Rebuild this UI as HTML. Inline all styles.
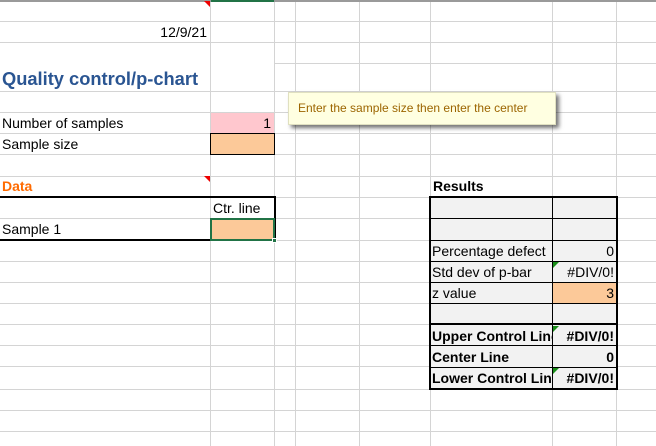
<!DOCTYPE html>
<html><head><meta charset="utf-8"><style>
body{margin:0;width:656px;height:446px;overflow:hidden;background:#fff;position:relative;font-family:"Liberation Sans",Arial,sans-serif;font-size:14px;color:#000}
.h{position:absolute;left:0;width:656px;height:1px;background:#d4d4d4}
.v{position:absolute;top:0;height:446px;width:1px;background:#d4d4d4}
.a{position:absolute;box-sizing:border-box}
.t{position:absolute;white-space:nowrap;line-height:21px}
.b{font-weight:bold}
.r{text-align:right}
</style></head><body>
<div class="v" style="left:210px"></div><div class="v" style="left:274px"></div><div class="v" style="left:295px"></div><div class="v" style="left:359px"></div><div class="v" style="left:430px"></div><div class="v" style="left:552px"></div><div class="v" style="left:616px"></div>
<div class="h" style="top:21px"></div><div class="h" style="top:42px"></div><div class="h" style="top:63px;left:274px;width:382px"></div><div class="h" style="top:91px"></div><div class="h" style="top:112px"></div><div class="h" style="top:133px"></div><div class="h" style="top:154px"></div><div class="h" style="top:176px"></div><div class="h" style="top:197px"></div><div class="h" style="top:218px"></div><div class="h" style="top:240px"></div><div class="h" style="top:261px"></div><div class="h" style="top:282px"></div><div class="h" style="top:303px"></div><div class="h" style="top:324px"></div><div class="h" style="top:345px"></div><div class="h" style="top:366px"></div><div class="h" style="top:389px"></div><div class="h" style="top:410px"></div><div class="h" style="top:431px"></div>
<div class="a" style="left:0;top:0;width:656px;height:2px;background:#9a9a9a"></div>
<div class="a" style="left:211px;top:0;width:63px;height:2px;background:#217346"></div>
<div class="a" style="left:204px;top:1px;width:0;height:0;border-left:6px solid transparent;border-top:6px solid #e00"></div>
<div class="t r" style="left:100px;width:107px;top:22px">12/9/21</div>
<div class="t b" style="left:2px;top:67px;font-size:18.3px;line-height:24px;color:#2a5592">Quality control/p-chart</div>
<div class="a" style="left:211px;top:113px;width:63px;height:20px;background:#ffc7ce"></div>
<div class="t" style="left:2px;top:113px">Number of samples</div>
<div class="t r" style="left:211px;width:60px;top:113px">1</div>
<div class="a" style="left:210px;top:133px;width:65px;height:22px;background:#fcc999;border:1px solid #000"></div>
<div class="t" style="left:2px;top:134px">Sample size</div>
<div class="t b" style="left:2px;top:176px;color:#ff6a00">Data</div>
<div class="a" style="left:204px;top:176px;width:0;height:0;border-left:6px solid transparent;border-top:6px solid #e00"></div>
<div class="a" style="left:0;top:196px;width:276px;height:45px;border:2px solid #000;border-left:none"></div>
<div class="t" style="left:213px;top:198px">Ctr. line</div>
<div class="t" style="left:2px;top:219px">Sample 1</div>
<div class="a" style="left:210px;top:218px;width:65px;height:23px;background:#fcc999;border:2px solid #217346"></div>
<div class="a" style="left:272px;top:238px;width:5px;height:5px;background:#217346;border:1px solid #fff"></div>
<div class="a" style="left:288px;top:92px;width:268px;height:33px;background:#ffffe1;border:1px solid #e0e0c0;box-shadow:3px 3px 4px rgba(0,0,0,.55);color:#9c6500;font-size:12px;line-height:31px;padding-left:9px">Enter the sample size then enter the center</div>
<div class="t b" style="left:433px;top:176px">Results</div>
<div class="a" style="left:429px;top:196px;width:189px;height:194px;background:#f2f2f2;border:2px solid #000"></div>
<div class="a" style="left:552px;top:197px;width:1px;height:192px;background:#000"></div>
<div class="a" style="left:430px;top:218px;width:187px;height:1px;background:#000"></div>
<div class="a" style="left:430px;top:240px;width:187px;height:1px;background:#000"></div>
<div class="a" style="left:430px;top:261px;width:187px;height:1px;background:#000"></div>
<div class="a" style="left:430px;top:282px;width:187px;height:1px;background:#000"></div>
<div class="a" style="left:430px;top:303px;width:187px;height:1px;background:#000"></div>
<div class="a" style="left:430px;top:323px;width:187px;height:2px;background:#000"></div>
<div class="a" style="left:430px;top:345px;width:187px;height:1px;background:#000"></div>
<div class="a" style="left:430px;top:367px;width:187px;height:1px;background:#000"></div>
<div class="a" style="left:553px;top:283px;width:63px;height:20px;background:#fcc999"></div>
<div class="t" style="left:432px;top:241px">Percentage defect</div>
<div class="t r" style="left:553px;width:61px;top:241px">0</div>
<div class="t" style="left:432px;top:262px">Std dev of p-bar</div>
<div class="t r" style="left:553px;width:61px;top:262px">#DIV/0!</div>
<div class="t" style="left:432px;top:283px">z value</div>
<div class="t r" style="left:553px;width:61px;top:283px">3</div>
<div class="a" style="left:430px;top:326px;width:122px;height:60px;overflow:hidden"><div class="t b" style="left:2px;top:0">Upper Control Line</div><div class="t b" style="left:2px;top:21px">Center Line</div><div class="t b" style="left:2px;top:42px">Lower Control Line</div></div>
<div class="t b r" style="left:553px;width:61px;top:326px">#DIV/0!</div>
<div class="t b r" style="left:553px;width:61px;top:347px">0</div>
<div class="t b r" style="left:553px;width:61px;top:368px">#DIV/0!</div>
<div class="a" style="left:553px;top:262px;width:0;height:0;border-right:6px solid transparent;border-top:6px solid #1a8f1a"></div>
<div class="a" style="left:553px;top:326px;width:0;height:0;border-right:6px solid transparent;border-top:6px solid #1a8f1a"></div>
<div class="a" style="left:553px;top:368px;width:0;height:0;border-right:6px solid transparent;border-top:6px solid #1a8f1a"></div>
</body></html>
